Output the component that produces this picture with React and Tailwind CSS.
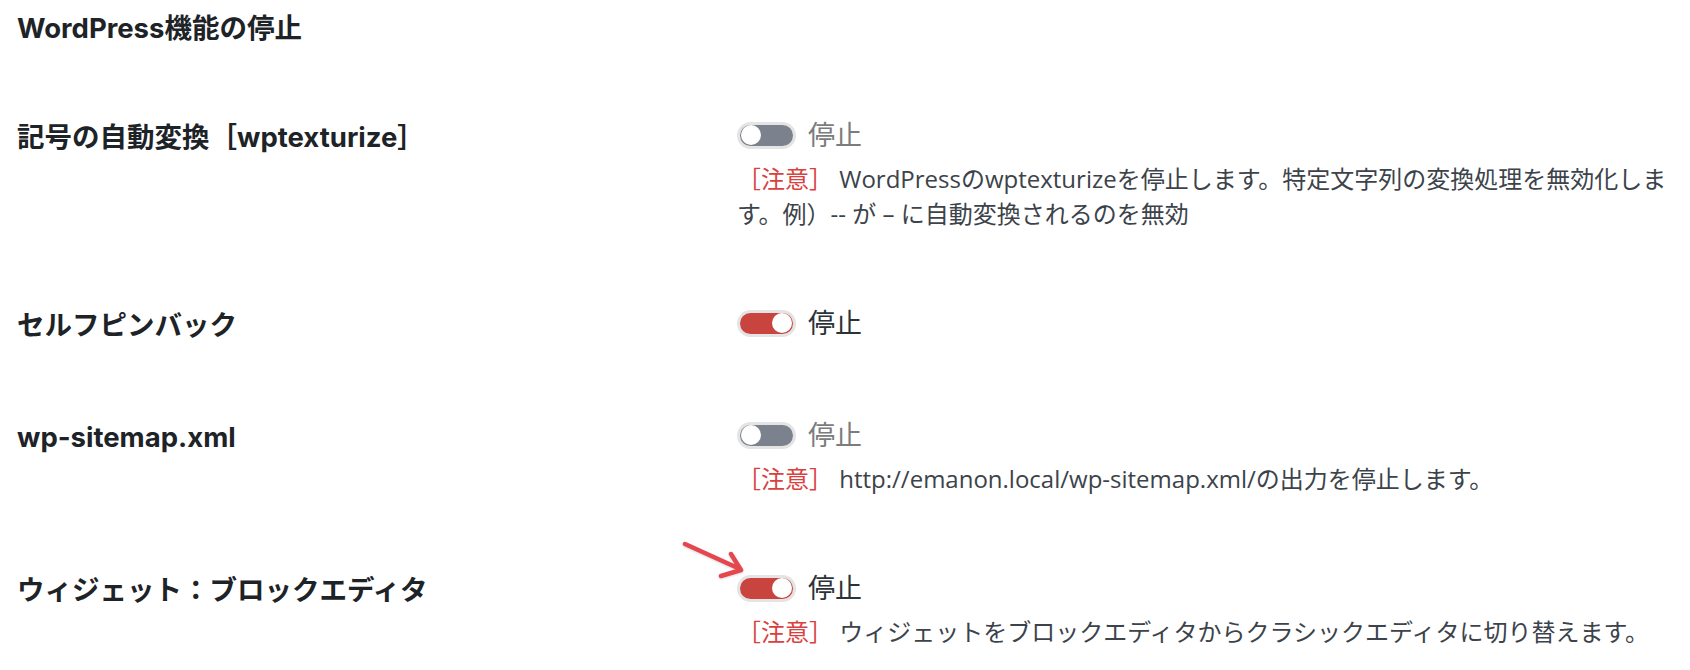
import React from "react";

const labelFont = { fontFamily: '"Inter","Noto Sans CJK JP",sans-serif' };
const bodyFont = { fontFamily: '"Open Sans","Noto Sans CJK JP",sans-serif' };

function Toggle({ on }) {
  return (
    <div className="h-[27px] w-[59px] shrink-0 rounded-full bg-[#e4e4e4] p-[3px]">
      <div
        className={
          on
            ? "flex h-full w-full items-center justify-end rounded-full bg-[#c9443e] px-[1px]"
            : "flex h-full w-full items-center justify-start rounded-full bg-[#7b828d] px-[1px]"
        }
      >
        <div className="h-[20px] w-[20px] rounded-full bg-white" />
      </div>
    </div>
  );
}

function Arrow() {
  return (
    <svg
      className="pointer-events-none absolute left-[-55px] top-[-36px]"
      width="66"
      height="44"
      viewBox="0 0 66 44"
      fill="none"
      style={{ filter: "drop-shadow(0 1px 1px rgba(0,0,0,0.15))" }}
    >
      <path
        d="M3 5 L58 30 M49 15 L59 31 L39 37"
        stroke="#e4474d"
        strokeWidth="4.5"
        strokeLinecap="round"
        strokeLinejoin="round"
      />
    </svg>
  );
}

function Row({ label, on, desc, arrow }) {
  return (
    <div className="flex">
      <div
        className="w-[720px] shrink-0 pt-[2px] text-[27.5px] font-bold leading-[36px] text-[#1d2327]"
        style={labelFont}
      >
        {label}
      </div>
      <div className="flex flex-col">
        <div className="flex h-[36px] items-center">
          <div className="relative">
            {arrow && <Arrow />}
            <Toggle on={on} />
          </div>
          <span
            className={
              on
                ? "ml-[12px] text-[27px] leading-[36px] text-[#2c3338]"
                : "ml-[12px] text-[27px] leading-[36px] text-[#7c7c7c]"
            }
            style={bodyFont}
          >
            停止
          </span>
        </div>
        {desc && (
          <p
            className="mt-[8px] text-[24px] leading-[35px] text-[#3c434a]"
            style={bodyFont}
          >
            <span className="text-[#d9413f]">［注意］</span> {desc}
          </p>
        )}
      </div>
    </div>
  );
}

export default function App() {
  return (
    <div className="min-h-[670px] w-[1690px] bg-white pl-[17px] pt-[10px]">
      <h2
        className="text-[27.5px] font-bold leading-[36px] text-[#1d2327]"
        style={labelFont}
      >
        WordPress機能の停止
      </h2>
      <div className="mt-[71px] flex flex-col gap-[74px]">
        <Row
          label="記号の自動変換［wptexturize］"
          on={false}
          desc={
            <>
              WordPressのwptexturizeを停止します。特定文字列の変換処理を無効化しま
              <br />
              す。例）-- が – に自動変換されるのを無効
            </>
          }
        />
        <Row label="セルフピンバック" on={true} />
        <Row
          label="wp-sitemap.xml"
          on={false}
          desc="http://emanon.local/wp-sitemap.xml/の出力を停止します。"
        />
        <Row
          label="ウィジェット：ブロックエディタ"
          on={true}
          arrow
          desc="ウィジェットをブロックエディタからクラシックエディタに切り替えます。"
        />
      </div>
    </div>
  );
}
